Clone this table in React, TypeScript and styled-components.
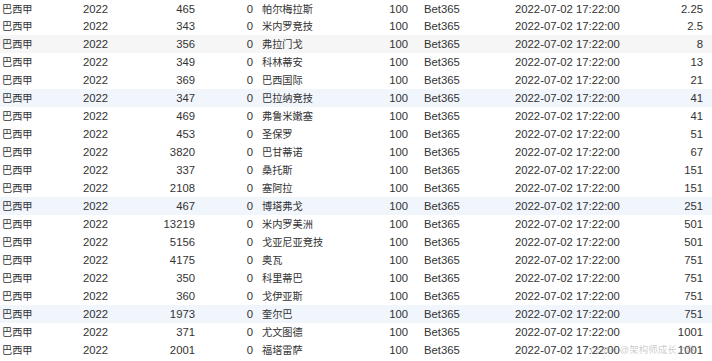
import React from "react";
import styled, { createGlobalStyle } from "styled-components";

const Global = createGlobalStyle`
  html, body { margin: 0; padding: 0; background: #ffffff; }
  body { font-family: "Liberation Sans", Arial, sans-serif; color: #333; }
`;

const Table = styled.div`
  position: relative;
  width: 712px;
  height: 361px;
  overflow: hidden;
  background: #fff;
`;

const Row = styled.div<{ $tone?: "gray" | "blue" }>`
  display: grid;
  grid-template-columns: 81px 67px 45px 58px 117px 38px 107px 115px 73px;
  padding-left: 2px;
  height: 18px;
  align-items: center;
  background: ${(p) => (p.$tone === "gray" ? "#f6f6f6" : p.$tone === "blue" ? "#f1f5fc" : "transparent")};
  &:first-child { height: 17px; }
`;

const Cell = styled.div<{ $align?: "right"; $cjk?: boolean; $pad?: number }>`
  text-align: ${(p) => (p.$align === "right" ? "right" : "left")};
  padding-left: ${(p) => p.$pad ?? 0}px;
  font-size: ${(p) => (p.$cjk ? "10.2px" : "11.3px")};
  font-family: ${(p) =>
    p.$cjk ? `"Noto Sans CJK SC", "Liberation Sans", sans-serif` : `"Liberation Sans", Arial, sans-serif`};
  color: #333;
  white-space: nowrap;
  line-height: 18px;
`;

const Watermark = styled.div`
  position: absolute;
  left: 590px;
  top: 343px;
  font-family: "Liberation Sans", "Noto Sans CJK SC", sans-serif;
  font-size: 9.5px;
  color: rgba(160, 160, 160, 0.55);
  white-space: nowrap;
  line-height: 14px;
`;

const rows: [string, string, string, number, "gray" | "blue" | undefined][] = [
  ["465", "帕尔梅拉斯", "2.25", 0, undefined],
  ["343", "米内罗竞技", "2.5", 0, undefined],
  ["356", "弗拉门戈", "8", 0, "gray"],
  ["349", "科林蒂安", "13", 0, undefined],
  ["369", "巴西国际", "21", 0, undefined],
  ["347", "巴拉纳竞技", "41", 0, "blue"],
  ["469", "弗鲁米嫩塞", "41", 0, undefined],
  ["453", "圣保罗", "51", 0, undefined],
  ["3820", "巴甘蒂诺", "67", 0, undefined],
  ["337", "桑托斯", "151", 0, undefined],
  ["2108", "塞阿拉", "151", 0, undefined],
  ["467", "博塔弗戈", "251", 0, "blue"],
  ["13219", "米内罗美洲", "501", 0, undefined],
  ["5156", "戈亚尼亚竞技", "501", 0, undefined],
  ["4175", "奥瓦", "751", 0, undefined],
  ["350", "科里蒂巴", "751", 0, undefined],
  ["360", "戈伊亚斯", "751", 0, undefined],
  ["1973", "奎尔巴", "751", 0, "blue"],
  ["371", "尤文图德", "1001", 0, undefined],
  ["2001", "福塔雷萨", "1001", 0, undefined],
];

export default function App() {
  return (
    <>
      <Global />
      <Table>
        {rows.map(([id, name, odds, zero, tone], i) => (
          <Row key={i} $tone={tone}>
            <Cell $cjk>巴西甲</Cell>
            <Cell>2022</Cell>
            <Cell $align="right">{id}</Cell>
            <Cell $align="right">{zero}</Cell>
            <Cell $cjk $pad={9}>{name}</Cell>
            <Cell $align="right">100</Cell>
            <Cell $pad={16}>Bet365</Cell>
            <Cell>2022-07-02 17:22:00</Cell>
            <Cell $align="right">{odds}</Cell>
          </Row>
        ))}
        <Watermark>CSDN @架构师成长之路</Watermark>
      </Table>
    </>
  );
}
